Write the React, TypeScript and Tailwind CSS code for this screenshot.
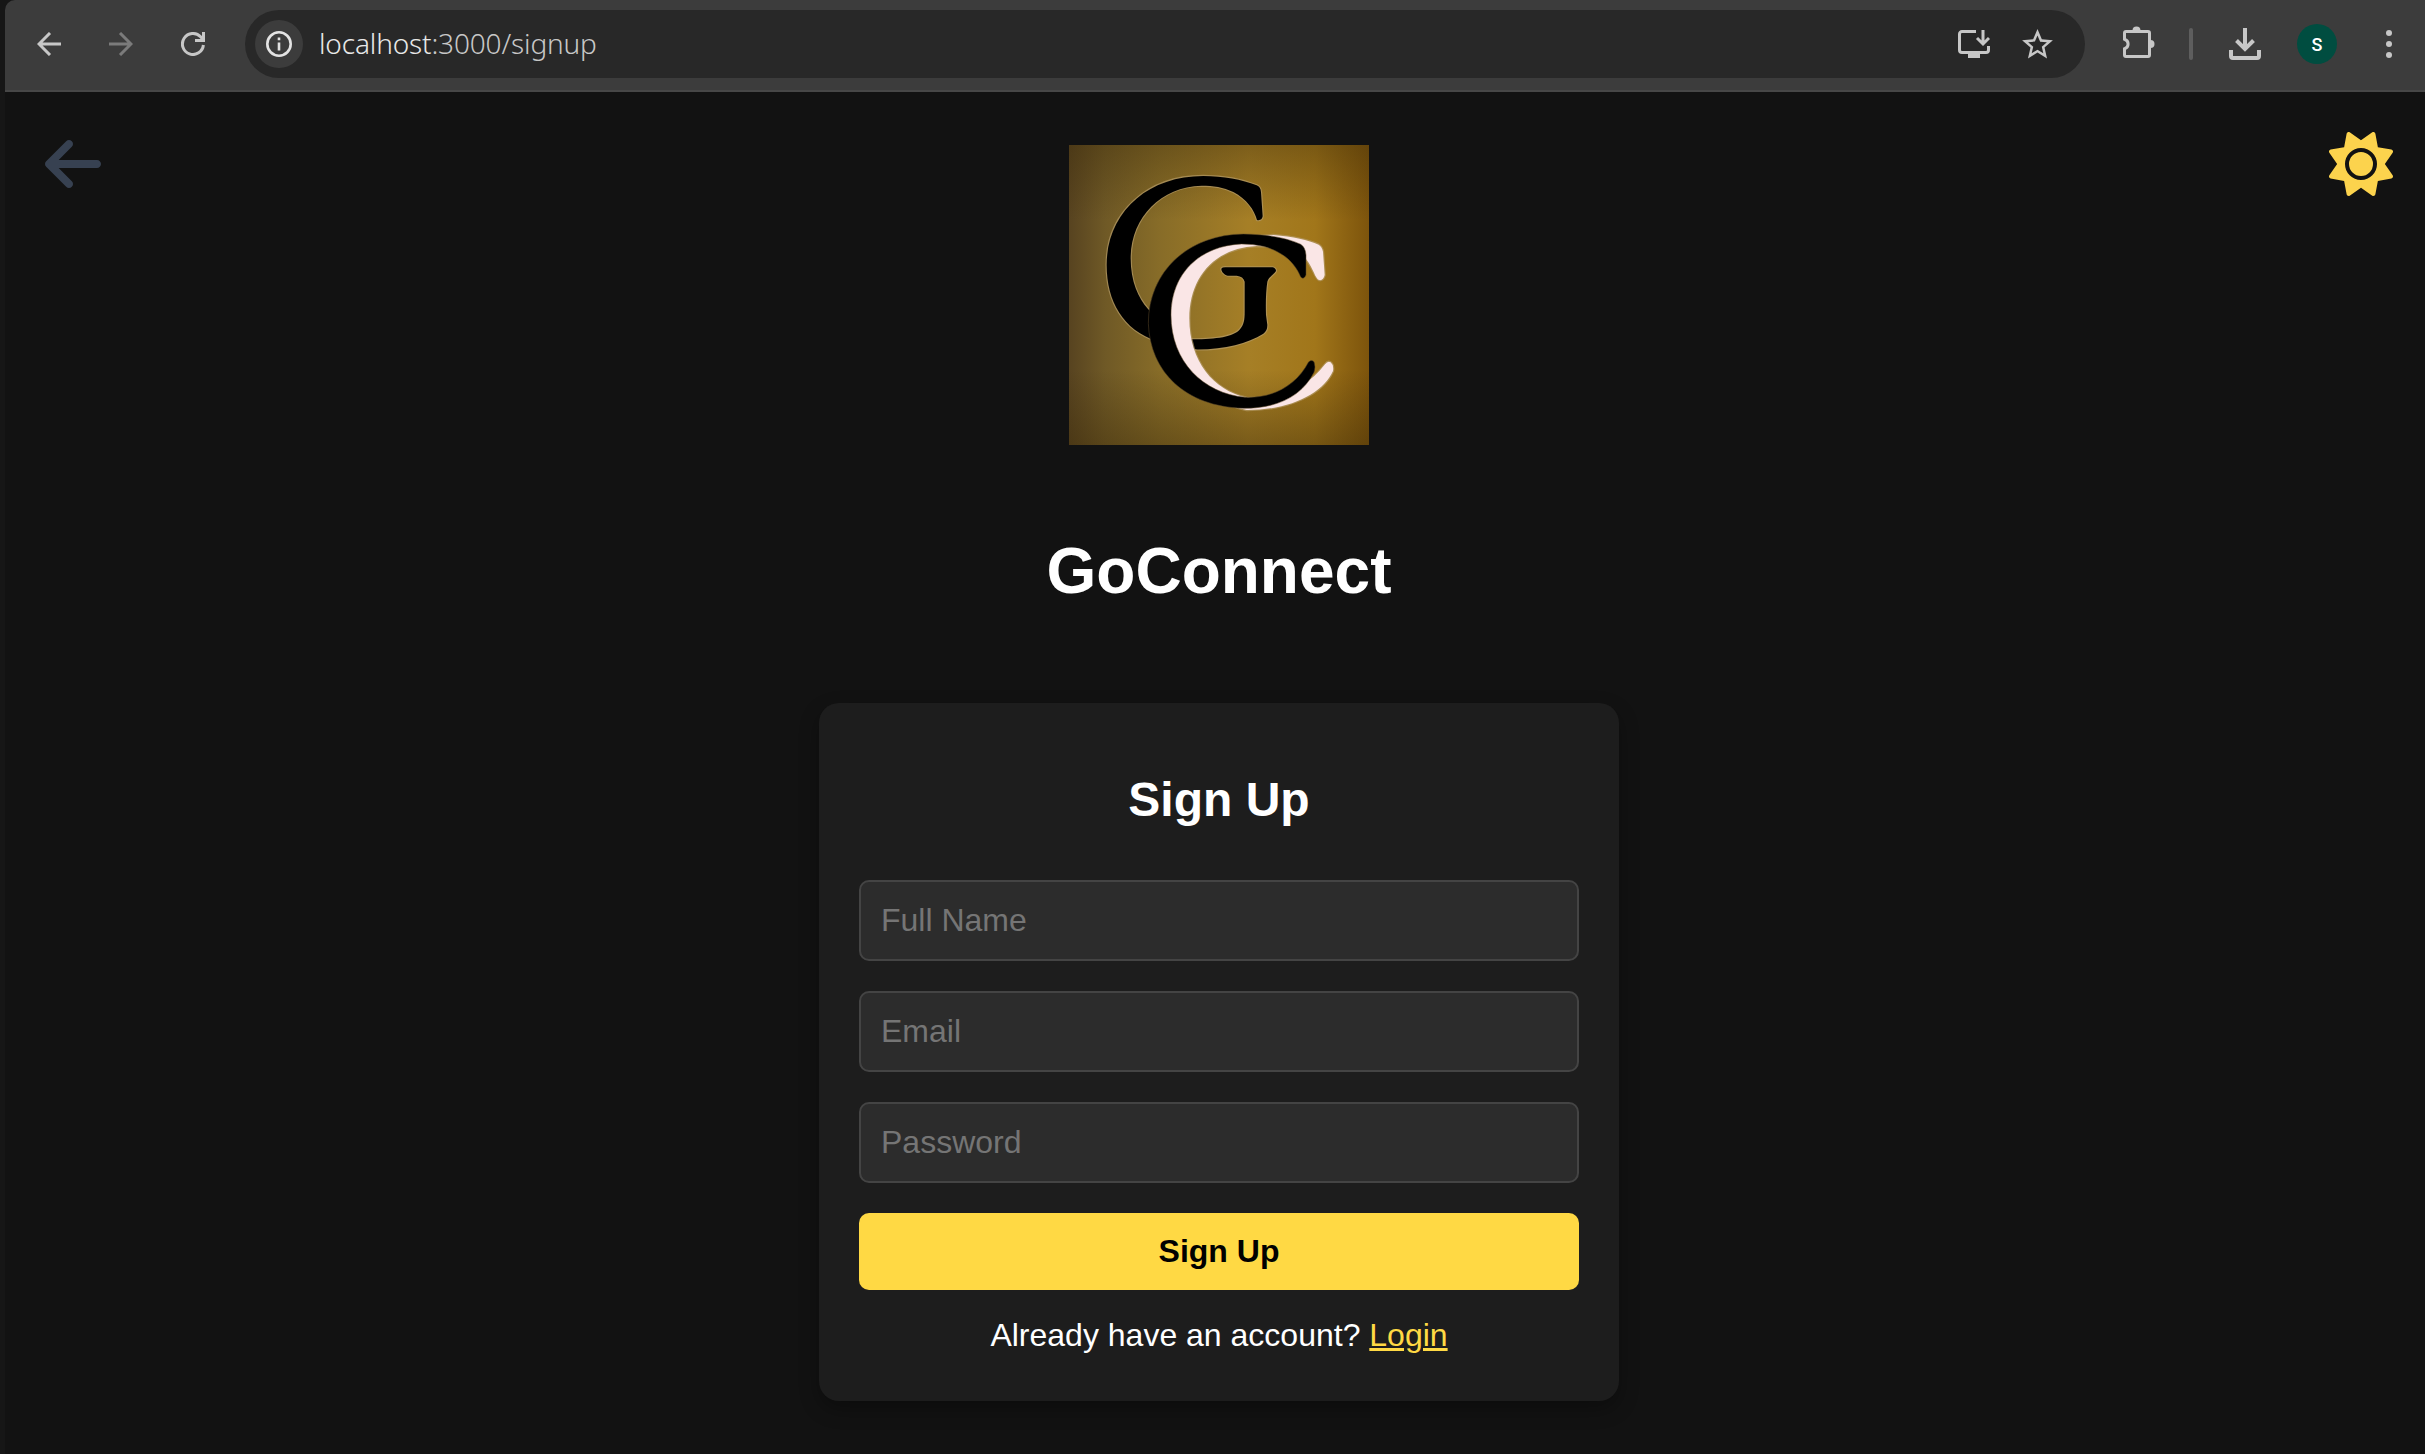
import { FaArrowLeft, FaSun } from "react-icons/fa6";
import { MdStarBorder } from "react-icons/md";

const ICON = "#c7c7c7";

function Arrow({ color, flip }: { color: string; flip?: boolean }) {
  return (
    <svg width="24" height="24" viewBox="0 0 24 24" fill="none" stroke={color} strokeWidth="3" className={flip ? "-scale-x-100" : ""}>
      <path d="M24 12H2.5M13 1 2 12l11 11" />
    </svg>
  );
}

function Reload() {
  return (
    <svg width="24" height="24" viewBox="0 0 24 24" fill="none" stroke={ICON} strokeWidth="3">
      <path d="M22.4 13A10.5 10.5 0 1 1 19.6 4.8L22 7.5" />
      <path d="M22.5 0v8.5H14" />
    </svg>
  );
}

function Info() {
  return (
    <svg width="26" height="26" viewBox="0 0 26 26" fill="none" stroke="#e3e3e3">
      <circle cx="13" cy="13" r="11.7" strokeWidth="2.6" />
      <path d="M13 11.5v8M13 6.6v2.6" strokeWidth="2.6" />
    </svg>
  );
}

function Install() {
  return (
    <svg width="32" height="28" viewBox="0 0 32 28" fill="none" stroke={ICON} strokeWidth="3">
      <path d="M18 1.5H4A2.5 2.5 0 0 0 1.5 4v16A2.5 2.5 0 0 0 4 22.5h24a2.5 2.5 0 0 0 2.5-2.5v-4" />
      <path d="M25 0v13.5M19 8l6 6 6-6" />
      <path d="M10 23h12v5H10z" fill={ICON} stroke="none" />
    </svg>
  );
}

function Puzzle() {
  return (
    <svg width="33" height="32" viewBox="0 0 33 32" fill="none" stroke={ICON} strokeWidth="3" className="mb-1">
      <path d="M4 5.500h22a1.500 1.500 0 0 1 1.500 1.500v22a1.500 1.500 0 0 1-1.500 1.500H4A1.500 1.500 0 0 1 2.500 29v-6.200a5 5 0 0 0 0-9.600V7A1.500 1.500 0 0 1 4 5.500z" />
      <path d="M10.500 4.500a4 4 0 0 1 8 0zM28.500 14a4 4 0 0 1 0 8z" fill={ICON} stroke="none" />
    </svg>
  );
}

function Download() {
  return (
    <svg width="32" height="32" viewBox="0 0 32 32" fill="none" stroke={ICON} strokeWidth="4">
      <path d="M16 0v20M7.500 12.500l8.500 8.500 8.500-8.500" />
      <path d="M2 22v6a2 2 0 0 0 2 2h24a2 2 0 0 0 2-2v-6" />
    </svg>
  );
}

function Dots() {
  return (
    <svg width="6" height="28" viewBox="0 0 6 28" fill={ICON}>
      <circle cx="3" cy="3" r="3" />
      <circle cx="3" cy="14" r="3" />
      <circle cx="3" cy="25" r="3" />
    </svg>
  );
}

function Toolbar() {
  return (
    <header className="flex h-[92px] shrink-0 items-start rounded-tl-[10px] border-b-2 border-[#474747] bg-[#3c3c3c]">
      <div className="flex h-[88px] w-full items-center">
        <div className="ml-8 flex gap-12">
          <Arrow color={ICON} />
          <Arrow color="#7b7b7b" flip />
          <Reload />
        </div>
        <div className="ml-10 flex h-[68px] w-[1840px] items-center rounded-full bg-[#282828] pl-2.5 pr-[29px]">
          <span className="flex size-12 items-center justify-center rounded-full bg-[#3c3c3c]">
            <Info />
          </span>
          <span className="mb-0.5 ml-4 whitespace-nowrap font-['Noto_Sans'] text-[28px] font-light leading-none tracking-[-0.15px] text-[#c7c7c7]">
            <span className="text-[#e8e8e8]">localhost</span>:3000/signup
          </span>
          <span className="ml-auto flex items-center gap-[29px]">
            <Install />
            <MdStarBorder className="size-[37px] text-[#c7c7c7]" />
          </span>
        </div>
        <div className="ml-[37px] flex items-center">
          <Puzzle />
          <span className="ml-[34px] h-8 w-1 rounded-full bg-[#5e5e5e]" />
          <span className="ml-9">
            <Download />
          </span>
          <span className="ml-9 flex size-10 items-center justify-center rounded-full bg-[#004d40] font-['Roboto'] text-[18px] font-medium text-white">
            S
          </span>
          <span className="ml-[49px]">
            <Dots />
          </span>
        </div>
      </div>
    </header>
  );
}

function Logo() {
  return (
    <svg width="300" height="300" viewBox="27 30 900 900" role="img" aria-label="GoConnect logo">
      <defs>
        <linearGradient id="gold" x1="0" x2="1" y1="0" y2="0">
          <stop offset="0" stopColor="#574320" />
          <stop offset="0.12" stopColor="#6f5926" />
          <stop offset="0.3" stopColor="#876c28" />
          <stop offset="0.6" stopColor="#a67f26" />
          <stop offset="0.82" stopColor="#a1761a" />
          <stop offset="1" stopColor="#7d540c" />
        </linearGradient>
        <linearGradient id="shade" x1="0" x2="0" y1="0" y2="1">
          <stop offset="0" stopColor="#3a2908" stopOpacity="0.38" />
          <stop offset="0.25" stopColor="#3a2908" stopOpacity="0" />
          <stop offset="0.75" stopColor="#3a2908" stopOpacity="0" />
          <stop offset="1" stopColor="#3a2908" stopOpacity="0.42" />
        </linearGradient>
      </defs>
      <rect x="27" y="30" width="900" height="900" fill="url(#gold)" />
      <rect x="27" y="30" width="900" height="900" fill="url(#shade)" />
      <g stroke="#b39a66" strokeOpacity="0.7" strokeWidth="7" strokeLinejoin="round" style={{ paintOrder: "stroke" }}>
        {/* rear ring with its hook */}
        <path d="M590 151Q602 156 603 172L608 244Q605 258 591 255C583 225 560 192 520 171C490 156 460 152 425 152C300 155 212 250 212 370C212 440 235 490 264 522L345 610L400 613C470 613 520 606 540 583C552 568 554 555 554 530V440Q550 424 530 422H503C490 418 484 408 484 401Q487 396 500 397H638Q648 400 648 408C640 420 626 426 622 440Q616 480 618 540L622 570Q622 588 610 596C560 626 490 645 400 643L290 618C190 585 140 500 140 390C140 235 260 123 430 123C490 124 545 133 590 151Z" fill="#000" />
        {/* light crescent */}
        <path d="M640 300C700 305 745 315 776 329Q786 335 789 350L794 420Q790 438 777 435C766 432 760 400 738 372C700 345 640 333 590 333C460 340 388 430 388 550C388 680 460 765 560 788C660 795 745 755 795 688Q803 677 812 682Q822 690 819 708C790 775 690 826 560 825C400 790 310 650 325 500Q350 310 640 300Z" fill="#fae6e6" />
      </g>
      {/* front crescent */}
      <path d="M722 328Q736 336 738 360L738 420Q732 436 722 426C706 385 670 350 610 334Q580 327 545 327C420 332 333 415 333 540C333 680 430 775 555 787C640 790 710 750 745 682Q752 672 762 680Q768 696 762 712C725 785 650 820 550 820C375 815 270 710 265 565C265 410 385 298 550 297C620 298 680 308 722 328Z" fill="#000" stroke="#5d4a2a" strokeOpacity="0.5" strokeWidth="3" />
    </svg>
  );
}

function Field({ type, placeholder }: { type: string; placeholder: string }) {
  return (
    <input
      type={type}
      placeholder={placeholder}
      className="h-[81px] w-full rounded-[10px] border-2 border-[#444444] bg-[#2c2c2c] px-5 text-[32px] text-white outline-none placeholder:text-[#757575]"
    />
  );
}

export default function App() {
  return (
    <div className="h-[1454px] w-[2425px] overflow-hidden bg-[#161616] pl-[5px] font-['Liberation_Sans',sans-serif] text-white">
      <Toolbar />
      <main className="relative flex h-[1362px] w-[2428px] flex-col items-center bg-[#121212] pt-[53px]">
        <button className="absolute left-10 top-10" aria-label="Back">
          <FaArrowLeft className="h-16 w-14 text-[#374151]" />
        </button>
        <button className="absolute right-10 top-10" aria-label="Toggle theme">
          <FaSun className="size-16 text-[#fcd34d]" />
        </button>
        <Logo />
        <h1 className="mt-[89px] text-[64px] font-bold leading-[74px]">GoConnect</h1>
        <form className="mt-[95px] flex h-[698px] w-[800px] flex-col items-center rounded-[20px] bg-[#1d1d1d] px-10 shadow-[0_8px_20px_rgba(0,0,0,0.3)]">
          <h2 className="mt-[69px] text-[48px] font-bold leading-[56px]">Sign Up</h2>
          <div className="mt-[52px] flex w-full flex-col gap-[30px]">
            <Field type="text" placeholder="Full Name" />
            <Field type="email" placeholder="Email" />
            <Field type="password" placeholder="Password" />
            <button type="button" className="h-[77px] w-full rounded-[10px] bg-[#ffd944] pb-0.5 text-[32px] font-bold leading-none text-black">
              Sign Up
            </button>
          </div>
          <p className="mt-[27px] text-[32px] leading-[37px]">
            Already have an account? <a className="text-[#ffd944] underline">Login</a>
          </p>
        </form>
      </main>
    </div>
  );
}
